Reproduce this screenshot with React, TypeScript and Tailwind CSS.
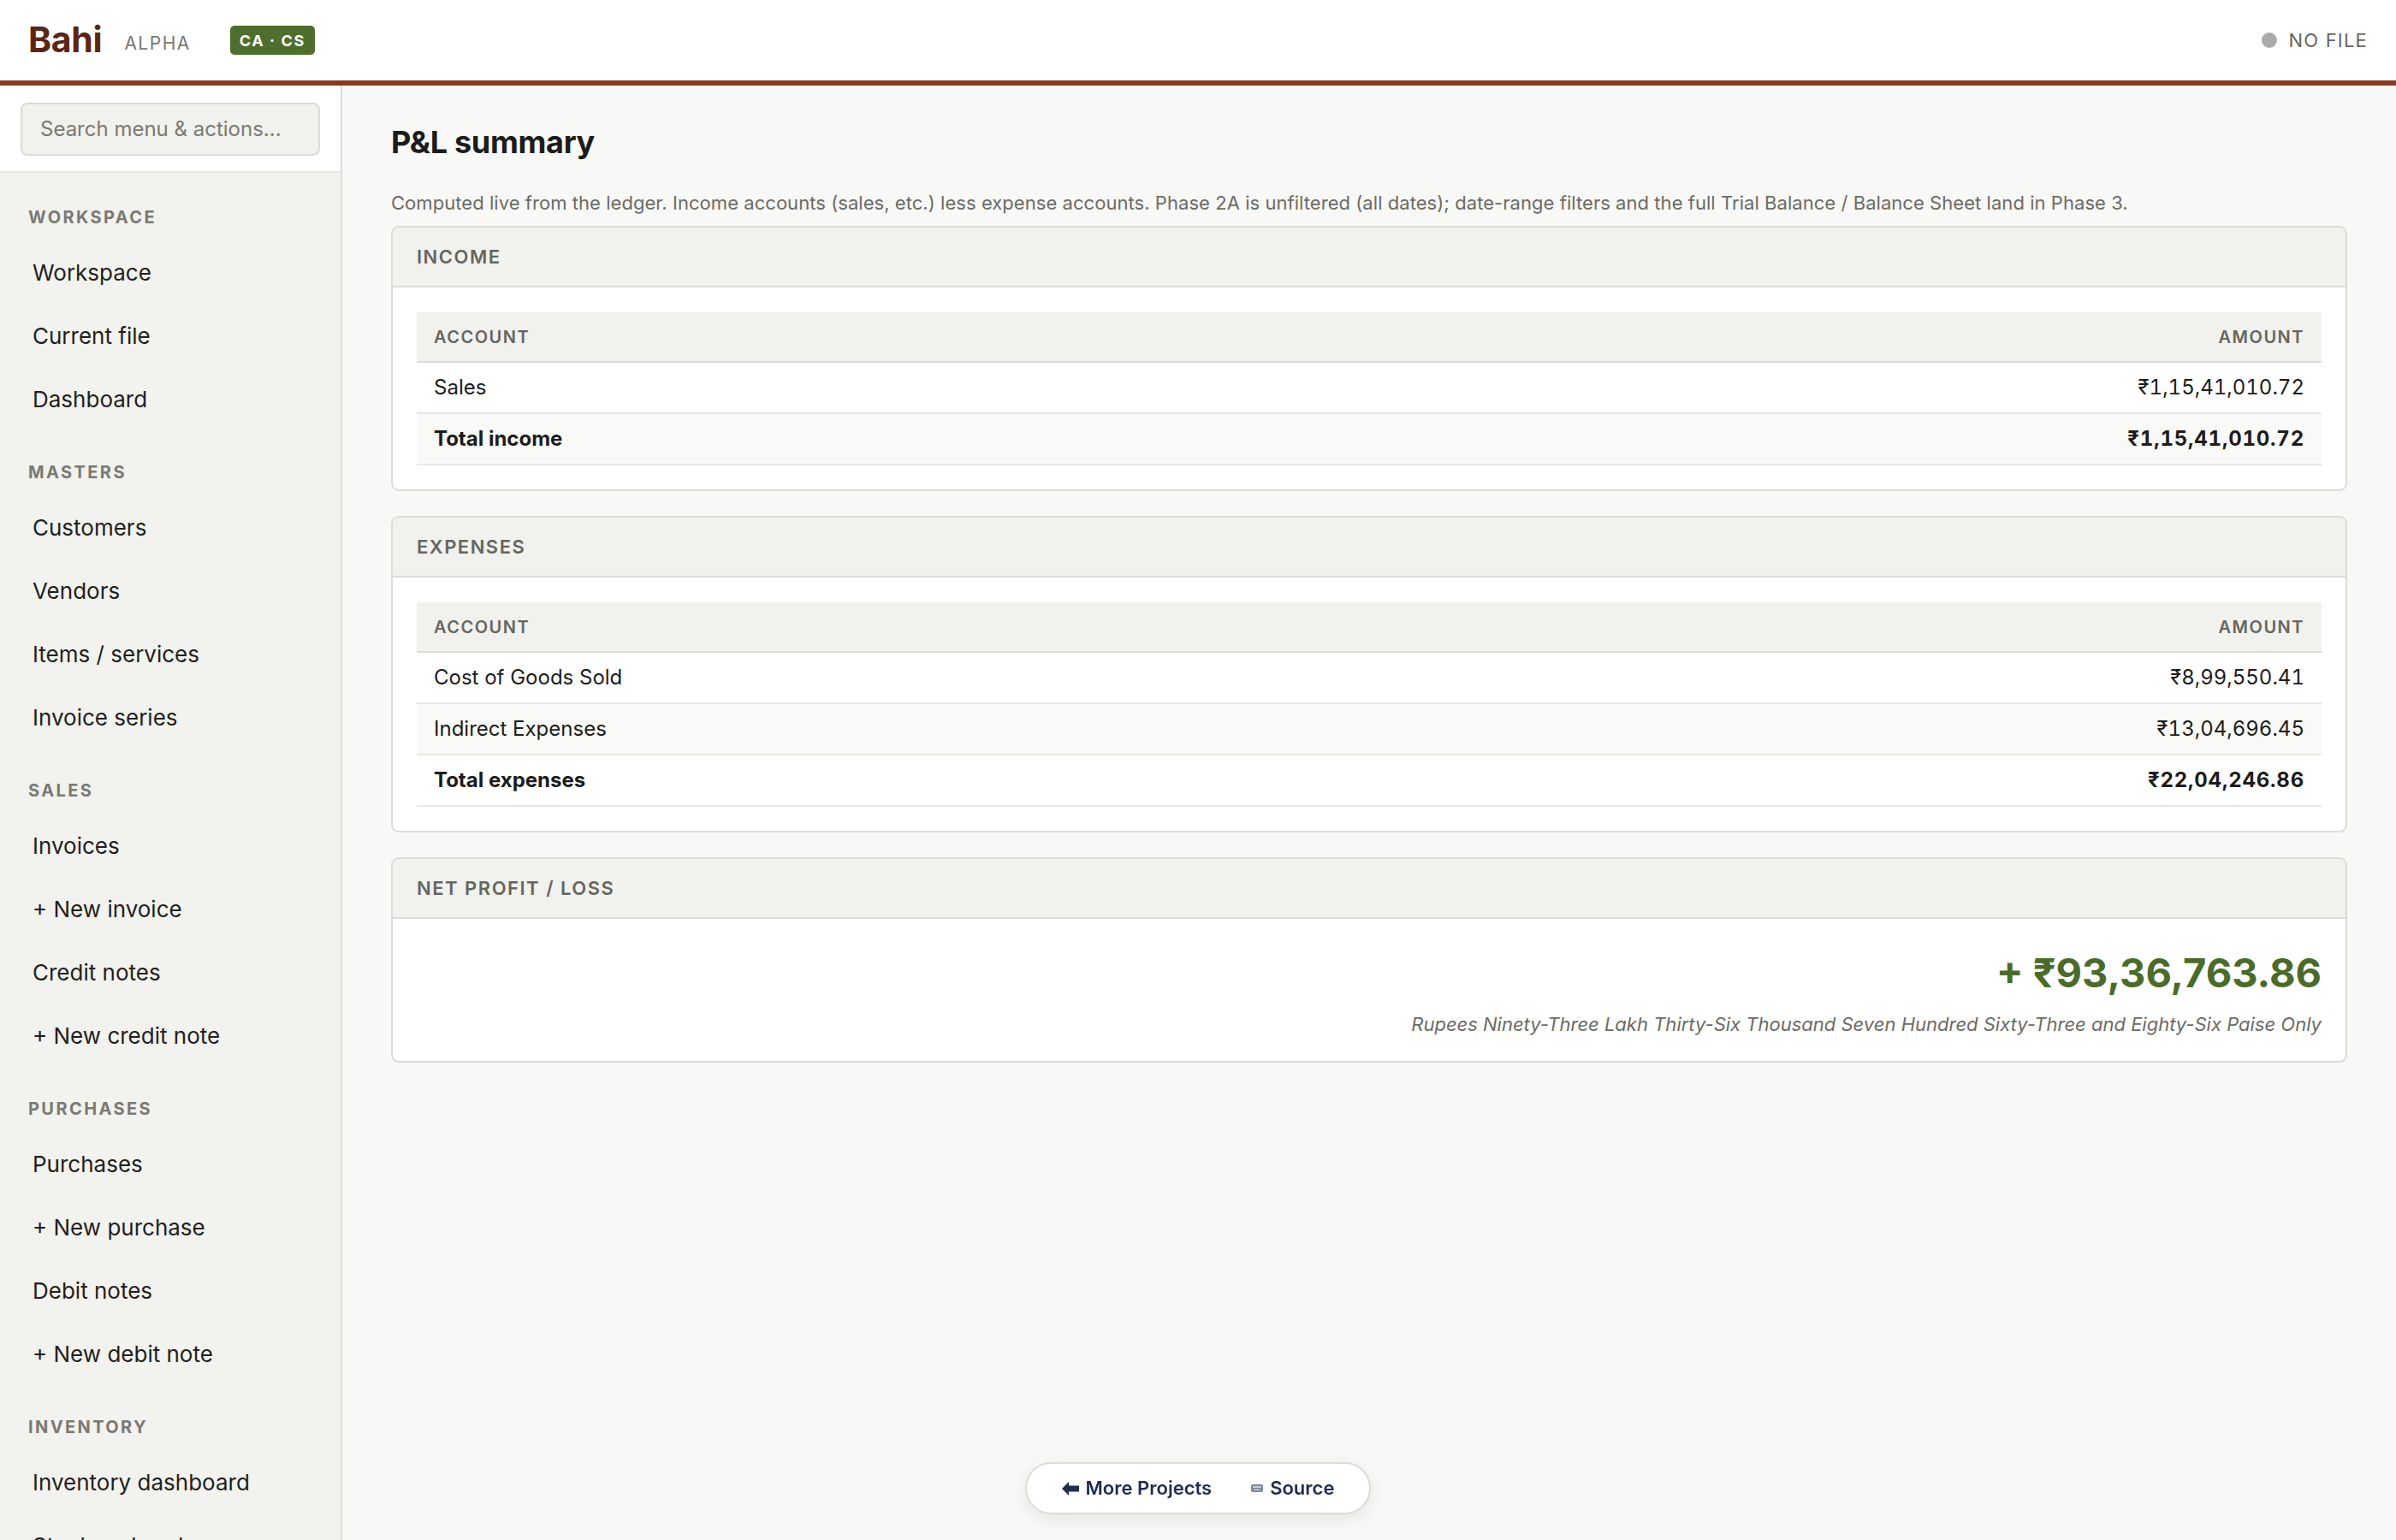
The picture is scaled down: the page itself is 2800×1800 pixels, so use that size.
import React from 'react';

interface Row {
  account: string;
  amount: string;
  total?: boolean;
}

const nav: { label: string; items: string[] }[] = [
  { label: 'Workspace', items: ['Workspace', 'Current file', 'Dashboard'] },
  { label: 'Masters', items: ['Customers', 'Vendors', 'Items / services', 'Invoice series'] },
  { label: 'Sales', items: ['Invoices', '+ New invoice', 'Credit notes', '+ New credit note'] },
  { label: 'Purchases', items: ['Purchases', '+ New purchase', 'Debit notes', '+ New debit note'] },
  { label: 'Inventory', items: ['Inventory dashboard', 'Stock on hand', 'Stock movements'] },
];

const income: Row[] = [
  { account: 'Sales', amount: '₹1,15,41,010.72' },
  { account: 'Total income', amount: '₹1,15,41,010.72', total: true },
];

const expenses: Row[] = [
  { account: 'Cost of Goods Sold', amount: '₹8,99,550.41' },
  { account: 'Indirect Expenses', amount: '₹13,04,696.45' },
  { account: 'Total expenses', amount: '₹22,04,246.86', total: true },
];

function Card({ title, children }: { title: string; children: React.ReactNode }) {
  return (
    <section className="rounded-[9px] border-2 border-[#dcdcd6] bg-white overflow-hidden">
      <div className="h-[70px] flex items-center px-[28px] bg-[#f1f1ed] border-b-2 border-[#dcdcd6]">
        <h2 className="text-[22px] font-semibold tracking-[1.5px] uppercase text-[#66665f]">{title}</h2>
      </div>
      {children}
    </section>
  );
}

function AccountTable({ rows }: { rows: Row[] }) {
  return (
    <div className="px-[28px] pt-[29px] pb-[28px]">
      <table className="w-full border-collapse">
        <thead>
          <tr className="h-[58px] bg-[#f1f1ed] border-b-2 border-[#dcdcd6]">
            <th className="px-[20px] text-left text-[20px] font-semibold tracking-[1.5px] text-[#66665f]">ACCOUNT</th>
            <th className="px-[20px] text-right text-[20px] font-semibold tracking-[1.5px] text-[#66665f]">AMOUNT</th>
          </tr>
        </thead>
        <tbody>
          {rows.map((r, i) => (
            <tr
              key={r.account}
              className={`h-[60px] border-b-2 border-[#e8e8e3] ${i % 2 === 1 ? 'bg-[#f9f9f7]' : 'bg-white'}`}
            >
              <td className={`px-[20px] text-[24px] text-[#1c1c1a] ${r.total ? 'font-bold' : ''}`}>{r.account}</td>
              <td className={`px-[20px] text-right text-[24px] tabular-nums text-[#1c1c1a] ${r.total ? 'font-bold tracking-[0.8px]' : ''}`}>
                {r.amount}
              </td>
            </tr>
          ))}
        </tbody>
      </table>
    </div>
  );
}

export default function App() {
  return (
    <div className="h-screen flex flex-col overflow-hidden bg-[#f8f8f6] text-[#1c1c1a] font-['Inter','Noto_Sans',sans-serif]">
      {/* Top bar */}
      <header className="h-[100px] shrink-0 bg-white border-b-[6px] border-[#8b3a1e] flex items-center justify-between pl-[33px] pr-[33px]">
        <div className="flex items-center">
          <span className="text-[41px] font-bold text-[#5c2413] tracking-[-0.3px]">Bahi</span>
          <span className="ml-[26px] mt-[8px] text-[21px] tracking-[1.5px] text-[#777772]">ALPHA</span>
          <span className="ml-[46px] h-[34px] px-[11px] rounded-[5px] bg-[#4d6e2c] text-white text-[18px] font-bold tracking-[1.6px] flex items-center">
            CA · CS
          </span>
        </div>
        <div className="flex items-center gap-[13px]">
          <span className="w-[18px] h-[18px] rounded-full bg-[#aaaaaa]" />
          <span className="text-[22px] tracking-[1.2px] text-[#66665f]">NO FILE</span>
        </div>
      </header>

      <div className="flex-1 flex min-h-0">
        {/* Sidebar */}
        <aside className="w-[400px] shrink-0 bg-[#f2f2ee] border-r-2 border-[#dcdcd6] overflow-hidden">
          <div className="h-[102px] bg-white border-b-2 border-[#e6e6e1] px-[24px] pt-[20px]">
            <div className="h-[62px] rounded-[8px] border-2 border-[#dcdcd6] bg-[#f1f1ed] flex items-center px-[21px] text-[24px] text-[#7a7a74]">
              Search menu &amp; actions...
            </div>
          </div>
          <nav className="pt-[25px]">
            {nav.map((sec, si) => (
              <div key={sec.label} className={si > 0 ? 'mt-[22px]' : ''}>
                <div className="h-[54px] flex items-center px-[33px] text-[20px] font-bold tracking-[2.4px] uppercase text-[#7a7a74]">
                  {sec.label}
                </div>
                {sec.items.map((it) => (
                  <div key={it} className="h-[74px] flex items-center px-[38px] text-[26px] text-[#1f1f1d]">
                    {it}
                  </div>
                ))}
              </div>
            ))}
          </nav>
        </aside>

        {/* Main */}
        <main className="flex-1 min-w-0 px-[57px] pt-[44px] overflow-hidden">
          <h1 className="text-[36px] leading-[45px] font-bold text-[#1c1c1a] tracking-[-0.3px]">P&amp;L summary</h1>
          <p className="mt-[30px] text-[22px] leading-[36px] tracking-[0.05px] text-[#6b6b66]">
            Computed live from the ledger. Income accounts (sales, etc.) less expense accounts. Phase 2A is unfiltered (all dates); date-range filters and the full Trial Balance / Balance Sheet land in Phase 3.
          </p>

          <div className="mt-[9px] flex flex-col gap-[29px]">
            <Card title="Income">
              <AccountTable rows={income} />
            </Card>
            <Card title="Expenses">
              <AccountTable rows={expenses} />
            </Card>
            <Card title="Net profit / loss">
              <div className="px-[28px] pt-[35px] pb-[26px] text-right">
                <div className="text-[47px] leading-[56px] font-bold text-[#4a6b2a]">+ ₹93,36,763.86</div>
                <div className="mt-[16px] text-[22px] leading-[33px] italic text-[#6b6b66]">
                  Rupees Ninety-Three Lakh Thirty-Six Thousand Seven Hundred Sixty-Three and Eighty-Six Paise Only
                </div>
              </div>
            </Card>
          </div>
        </main>
      </div>

      {/* Floating links */}
      <div className="fixed bottom-[30px] left-1/2 -translate-x-1/2 h-[61px] w-[404px] rounded-full bg-white border-2 border-[#dcdcd6] shadow-[0_6px_20px_rgba(0,0,0,0.08)] flex items-center justify-center gap-[46px] text-[22px] font-semibold text-[#1e2d50]">
        <span className="flex items-center gap-[8px]">
          <svg width="20" height="16" viewBox="0 0 20 16" className="fill-[#1e2d50]">
            <path d="M0 8 L8 0 L8 4.5 L20 4.5 L20 11.5 L8 11.5 L8 16 Z" />
          </svg>
          More Projects
        </span>
        <span className="flex items-center gap-[8px]">
          <svg width="14" height="9" viewBox="0 0 14 9">
            <rect x="0" y="0" width="14" height="9" rx="2" fill="#7d8799" />
            <rect x="2" y="2" width="10" height="2" rx="0.5" fill="#c9ced8" />
            <rect x="3" y="5.5" width="8" height="1.5" rx="0.5" fill="#c9ced8" />
          </svg>
          Source
        </span>
      </div>
    </div>
  );
}
